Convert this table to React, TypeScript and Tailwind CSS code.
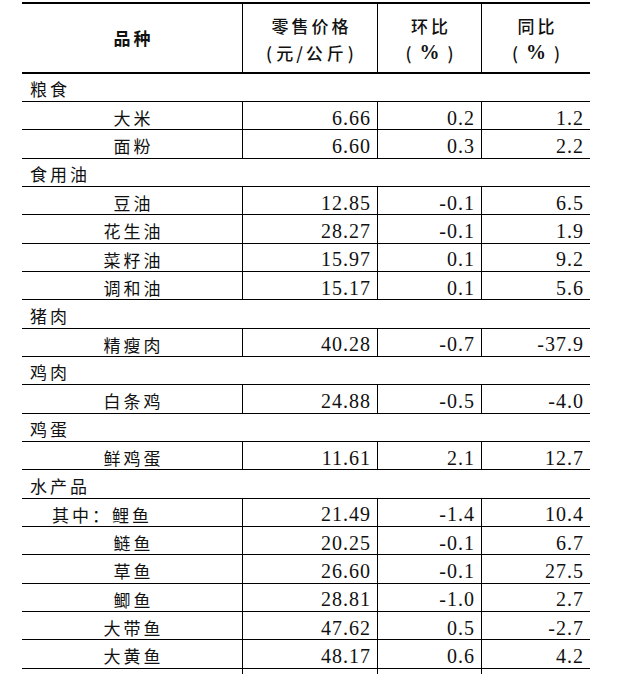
import React from 'react';

type Row =
  | { kind: 'cat'; name: string }
  | { kind: 'item'; name: string; price: string; mom: string; yoy: string; lead?: string };

const rows: Row[] = [
  { kind: 'cat', name: '粮食' },
  { kind: 'item', name: '大米', price: '6.66', mom: '0.2', yoy: '1.2' },
  { kind: 'item', name: '面粉', price: '6.60', mom: '0.3', yoy: '2.2' },
  { kind: 'cat', name: '食用油' },
  { kind: 'item', name: '豆油', price: '12.85', mom: '-0.1', yoy: '6.5' },
  { kind: 'item', name: '花生油', price: '28.27', mom: '-0.1', yoy: '1.9' },
  { kind: 'item', name: '菜籽油', price: '15.97', mom: '0.1', yoy: '9.2' },
  { kind: 'item', name: '调和油', price: '15.17', mom: '0.1', yoy: '5.6' },
  { kind: 'cat', name: '猪肉' },
  { kind: 'item', name: '精瘦肉', price: '40.28', mom: '-0.7', yoy: '-37.9' },
  { kind: 'cat', name: '鸡肉' },
  { kind: 'item', name: '白条鸡', price: '24.88', mom: '-0.5', yoy: '-4.0' },
  { kind: 'cat', name: '鸡蛋' },
  { kind: 'item', name: '鲜鸡蛋', price: '11.61', mom: '2.1', yoy: '12.7' },
  { kind: 'cat', name: '水产品' },
  { kind: 'item', name: '鲤鱼', lead: '其中：', price: '21.49', mom: '-1.4', yoy: '10.4' },
  { kind: 'item', name: '鲢鱼', price: '20.25', mom: '-0.1', yoy: '6.7' },
  { kind: 'item', name: '草鱼', price: '26.60', mom: '-0.1', yoy: '27.5' },
  { kind: 'item', name: '鲫鱼', price: '28.81', mom: '-1.0', yoy: '2.7' },
  { kind: 'item', name: '大带鱼', price: '47.62', mom: '0.5', yoy: '-2.7' },
  { kind: 'item', name: '大黄鱼', price: '48.17', mom: '0.6', yoy: '4.2' },
];

const cjk = "font-['Noto_Sans_CJK_SC',sans-serif]";
const num = "font-['Liberation_Serif','Times_New_Roman',serif] text-[20px] tracking-[1px] leading-none pt-[3px]";
const cols = 'grid grid-cols-[221px_135px_104px_108px]';

function NumCell({ v, last }: { v: string; last?: boolean }) {
  return (
    <div className={`flex items-center justify-end pr-[6px] ${last ? '' : 'border-r border-black'} ${num}`}>
      {v}
    </div>
  );
}

// 表头单位：括号间距加宽
function Unit({ children }: { children: React.ReactNode }) {
  return (
    <span className="flex items-center font-medium">
      <span className="mr-[4px]">(</span>
      {children}
      <span className="ml-[4px]">)</span>
    </span>
  );
}

export default function App() {
  return (
    <div className="w-[620px] h-[674px] overflow-hidden bg-white text-[#111] pl-[22px] pt-[2px]">
      <div className="w-[568px]">
        {/* 表头 */}
        <div className={`${cols} h-[72px] border-y-2 border-black ${cjk} text-[17px]`}>
          <div className="flex items-center justify-center border-r border-black font-bold tracking-[3px] pl-[3px]">
            品种
          </div>
          <div className="flex flex-col items-center justify-center border-r border-black leading-[27px] pt-[1px]">
            <span className="tracking-[3px] pl-[3px] font-medium">零售价格</span>
            <Unit>
              <span>元</span>
              <span className="mx-[3px]">/</span>
              <span className="tracking-[4px] mr-[-4px]">公斤</span>
            </Unit>
          </div>
          <div className="flex flex-col items-center justify-center border-r border-black leading-[27px] pt-[1px]">
            <span className="tracking-[3px] pl-[3px] font-medium">环比</span>
            <Unit>
              <span className="font-['Liberation_Serif',serif] font-bold text-[20px] mx-[4px]">%</span>
            </Unit>
          </div>
          <div className="flex flex-col items-center justify-center leading-[27px] pt-[1px]">
            <span className="tracking-[3px] pl-[3px] font-medium">同比</span>
            <Unit>
              <span className="font-['Liberation_Serif',serif] font-bold text-[20px] mx-[4px]">%</span>
            </Unit>
          </div>
        </div>

        {rows.map((r, i) =>
          r.kind === 'cat' ? (
            <div
              key={i}
              className={`${i === 0 ? 'h-[28px]' : 'h-[28.33px]'} border-b border-black flex items-center pl-[8px] pt-[3px] ${cjk} text-[17px] tracking-[3px]`}
            >
              {r.name}
            </div>
          ) : (
            <div key={i} className={`${cols} h-[28.33px] border-b border-black`}>
              {r.lead ? (
                <div className={`flex items-center pl-[30px] pt-[3px] border-r border-black ${cjk} text-[17px] tracking-[3px]`}>
                  {r.lead}
                  {r.name}
                </div>
              ) : (
                <div className={`flex items-center justify-center pl-[3px] pt-[3px] border-r border-black ${cjk} text-[17px] tracking-[3px]`}>
                  {r.name}
                </div>
              )}
              <NumCell v={r.price} />
              <NumCell v={r.mom} />
              <NumCell v={r.yoy} last />
            </div>
          )
        )}

        {/* 下一行（被截断） */}
        <div className={`${cols} h-[28px]`}>
          <div className="border-r border-black" />
          <div className="border-r border-black" />
          <div className="border-r border-black" />
          <div />
        </div>
      </div>
    </div>
  );
}
